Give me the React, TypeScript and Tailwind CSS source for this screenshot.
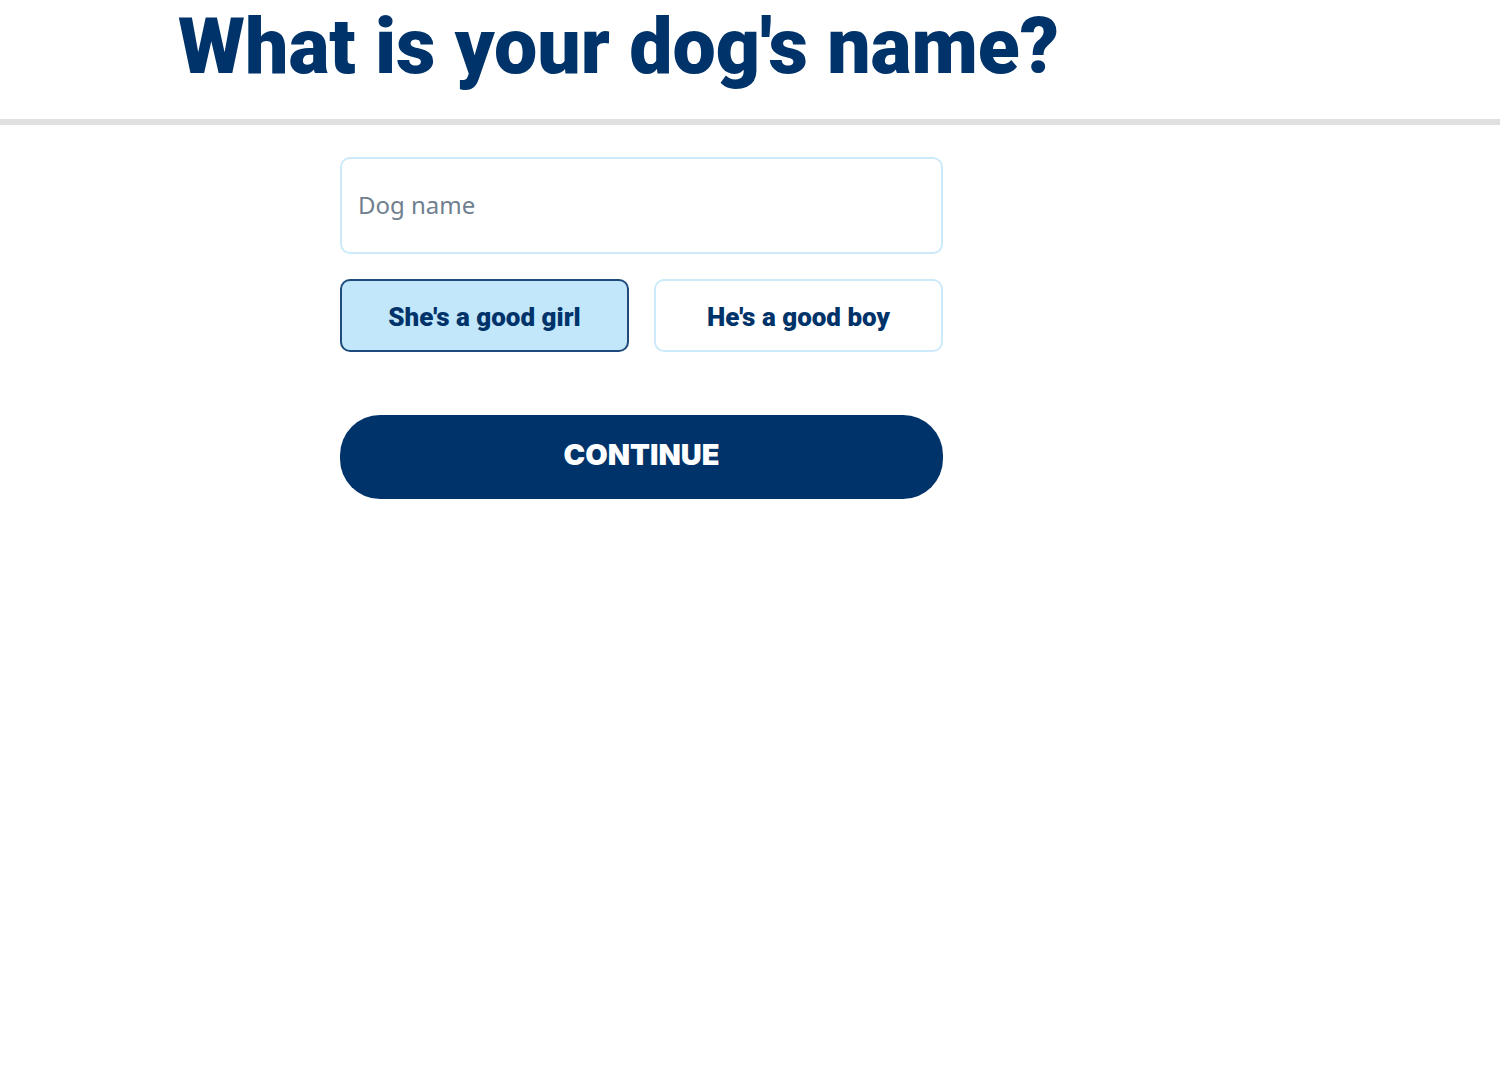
import React, { useState } from 'react';

interface GenderButtonProps {
  label: string;
  selected: boolean;
  onSelect: () => void;
}

const GenderButton: React.FC<GenderButtonProps> = ({ label, selected, onSelect }) => {
  return (
    <button
      type="button"
      aria-pressed={selected}
      onClick={onSelect}
      className={`flex-1 h-[73px] rounded-[10px] border-2 pt-0.5 text-center text-[26px] leading-8 font-black text-[#003369] ${
        selected ? 'border-[#1f4b7c] bg-[#c2e7fb]' : 'border-[#cdeafa] bg-white'
      }`}
    >
      {label}
    </button>
  );
};

const App: React.FC = () => {
  const [name, setName] = useState('');
  const [gender, setGender] = useState('girl');

  return (
    <div className="min-h-screen bg-white font-['Roboto',sans-serif]">
      <header className="border-b-6 border-[#e0e0e0]">
        <h1 className="pl-[178px] pb-6 text-[77px] leading-[95px] font-black text-[#003369]">
          What is your dog's name?
        </h1>
      </header>

      <main className="w-full max-w-[1283px] pt-8">
        <form
          className="mx-auto flex w-full max-w-[603px] flex-col"
          onSubmit={(e) => e.preventDefault()}
        >
          <input
            type="text"
            aria-label="Dog name"
            placeholder="Dog name"
            value={name}
            onChange={(e) => setName(e.target.value)}
            className="h-[97px] w-full rounded-[10px] border-2 border-[#cdeafa] px-4 pb-0.5 font-['Noto_Sans',sans-serif] text-[24px] text-[#003369] outline-none placeholder:text-[#6f7f8f]"
          />

          <div className="mt-[25px] flex gap-[25px]">
            <GenderButton
              label="She's a good girl"
              selected={gender === 'girl'}
              onSelect={() => setGender('girl')}
            />
            <GenderButton
              label="He's a good boy"
              selected={gender === 'boy'}
              onSelect={() => setGender('boy')}
            />
          </div>

          <button
            type="submit"
            className="mt-[63px] h-[84px] w-full rounded-[40px] bg-[#003369] pb-1 font-['Inter',sans-serif] text-[29px] font-black text-white uppercase"
          >
            Continue
          </button>
        </form>
      </main>
    </div>
  );
};

export default App;
